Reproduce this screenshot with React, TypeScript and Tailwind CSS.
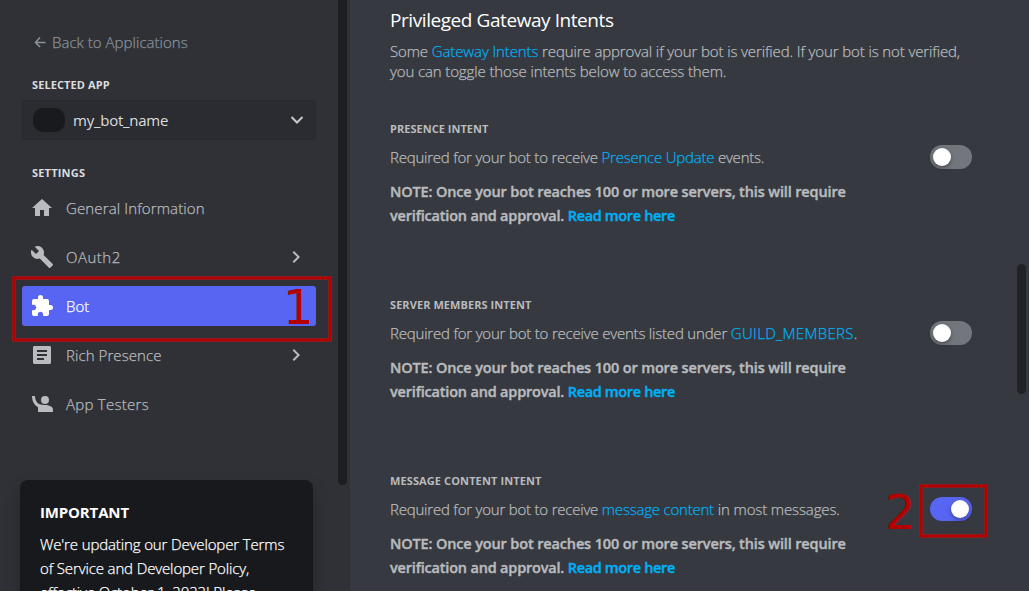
import type { ReactNode } from "react";

function Line({ className, children }: { className?: string; children: ReactNode }) {
  return <div className={`whitespace-nowrap ${className ?? ""}`}>{children}</div>;
}

function Icon({ d }: { d: string }) {
  return (
    <svg className="size-6 shrink-0" viewBox="0 0 24 24" fill="currentColor" fillRule="evenodd">
      <path d={d} />
    </svg>
  );
}

const icons = {
  home: "M10 20v-6h4v6h5v-8h3L12 3 2 12h3v8z",
  wrench:
    "M22.7 19l-9.1-9.1c.9-2.3.4-5-1.5-6.9-2-2-5-2.4-7.4-1.3L9 6 6 9 1.6 4.7C.4 7.1.9 10.1 2.9 12.1c1.9 1.9 4.6 2.4 6.9 1.5l9.1 9.1c.4.4 1 .4 1.4 0l2.3-2.3c.5-.4.5-1.1.1-1.4z",
  puzzle:
    "M20.5 11H19V7c0-1.1-.9-2-2-2h-4V3.5a2.5 2.5 0 00-5 0V5H4c-1.1 0-1.99.9-1.99 2v3.8H3.5c1.49 0 2.7 1.21 2.7 2.7s-1.21 2.7-2.7 2.7H2V20c0 1.1.9 2 2 2h3.8v-1.5c0-1.49 1.21-2.7 2.7-2.7 1.49 0 2.7 1.21 2.7 2.7V22H17c1.1 0 2-.9 2-2v-4h1.5a2.5 2.5 0 000-5z",
  article:
    "M19.500 3h-15C3.700 3 3 3.700 3 4.500v15c0 .8.7 1.500 1.500 1.500h15c.8 0 1.500-.7 1.500-1.500v-15c0-.8-.7-1.500-1.500-1.500zM14 17H7v-2h7v2zm3-4H7v-2h10v2zm0-4H7V7h10v2z",
  tester:
    "M15 4a4 4 0 100 8 4 4 0 000-8zM2 4h3c0 4.200 2 7.800 6 8.600 1.500.4 2.500.4 4 .4 4 0 8 1.500 8 4.500V20H8v-4.800C4.200 13.200 2 9 2 4z",
};

function Chevron() {
  return (
    <svg className="size-6" viewBox="0 0 24 24" fill="currentColor">
      <path d="M10 6L8.590 7.410 13.170 12l-4.580 4.590L10 18l6-6z" />
    </svg>
  );
}

function NavRow({
  icon,
  label,
  tracking,
  chevron,
  active,
}: {
  icon: string;
  label: string;
  tracking: string;
  chevron?: boolean;
  active?: boolean;
}) {
  return (
    <div
      className={`flex h-10 items-center rounded-[3px] pr-2 pl-2 ${
        active ? "bg-[#5865f2] text-white" : "text-[#b9bbbe]"
      }`}
    >
      <Icon d={icon} />
      <Line className={`ml-3 flex-1 text-[15px] leading-5 font-light [-webkit-text-stroke:0.25px] ${tracking}`}>
        {label}
      </Line>
      {chevron && <Chevron />}
    </div>
  );
}

function Toggle({ on }: { on?: boolean }) {
  return (
    <div
      className={`flex h-6 w-[42px] items-center rounded-full px-[3px] ${
        on ? "justify-end bg-[#5865f2]" : "bg-[#72767d]"
      }`}
    >
      <div className="size-[18px] rounded-full bg-white shadow-[0_2px_4px_rgba(0,0,0,0.35)]" />
    </div>
  );
}

function Intent({
  title,
  titleTracking,
  children,
  on,
}: {
  title: string;
  titleTracking: string;
  children: ReactNode;
  on?: boolean;
}) {
  return (
    <section className="flex h-44 shrink-0 text-[#b9bbbe]">
      <div className="flex-1">
        <Line className={`text-[11px] leading-4 font-bold ${titleTracking}`}>{title}</Line>
        <div className="mt-2.5 text-[15px] leading-5 font-light [-webkit-text-stroke:0.25px]">{children}</div>
        <div className="mt-[13px] text-[14.5px] leading-6 font-semibold [-webkit-text-stroke:0.4px]">
          <Line className="tracking-[-0.14px]">NOTE: Once your bot reaches 100 or more servers, this will require</Line>
          <Line className="tracking-[-0.19px]">
            verification and approval. <a className="tracking-[-0.34px] text-[#00aff4]">Read more here</a>
          </Line>
        </div>
      </div>
      <div className="pt-6">
        <Toggle on={on} />
      </div>
    </section>
  );
}

function Sidebar() {
  return (
    <aside className="flex w-[350px] shrink-0 bg-[#2f3136]">
      <div className="flex w-[338px] flex-col pl-[22px]">
        <div className="mt-8 flex h-5 shrink-0 items-center pl-3 text-[#8a929b]">
          <svg className="h-3 w-3" viewBox="0 0 12 12" fill="none" stroke="currentColor" strokeWidth="1.500">
            <path d="M11.500 6.500H1.500M6 1.500L1.500 6.500L6 11" />
          </svg>
          <Line className="ml-1.5 text-[15px] leading-5 font-light tracking-[0.03px] [-webkit-text-stroke:0.25px]">
            Back to Applications
          </Line>
        </div>
        <Line className="mt-[25px] pl-2.5 text-[11px] leading-4 font-bold tracking-[0.1px] text-[#dcddde]">
          SELECTED APP
        </Line>
        <div className="mt-[7px] flex h-10 w-[294px] shrink-0 items-center rounded-[4px] border border-[#26282c] bg-[#2b2c31] pr-1.5 pl-2.5 text-[#dcddde]">
          <div className="h-6 w-8 rounded-[10px] bg-[#191a1d]" />
          <Line className="ml-2 flex-1 text-[15px] leading-5 tracking-[-0.25px]">my_bot_name</Line>
          <svg className="size-6" viewBox="0 0 24 24" fill="none" stroke="#c7c9cb" strokeWidth="2">
            <path d="M6.500 9L12 14.500L17.500 9" />
          </svg>
        </div>
        <Line className="mt-[25px] pl-2.5 text-[11px] leading-4 font-bold tracking-[0.2px] text-[#dcddde]">SETTINGS</Line>
        <nav className="mt-[7px] flex w-[294px] shrink-0 flex-col gap-[9px]">
          <NavRow icon={icons.home} label="General Information" tracking="tracking-[0.13px]" />
          <NavRow icon={icons.wrench} label="OAuth2" tracking="tracking-[0.5px]" chevron />
          <NavRow icon={icons.puzzle} label="Bot" tracking="tracking-normal" active />
          <NavRow icon={icons.article} label="Rich Presence" tracking="tracking-[0.08px]" chevron />
          <NavRow icon={icons.tester} label="App Testers" tracking="tracking-[0.27px]" />
        </nav>
        <div className="mt-14 -ml-0.5 h-60 w-[293px] shrink-0 rounded-lg bg-[#18191c] px-5 pt-[22px] text-white shadow-[0_8px_16px_rgba(0,0,0,0.24)]">
          <Line className="text-[15px] leading-5 font-bold tracking-[-0.15px]">IMPORTANT</Line>
          <div className="mt-2.5 text-[15px] leading-6 font-light tracking-[-0.13px] [-webkit-text-stroke:0.25px]">
            <Line>We're updating our Developer Terms</Line>
            <Line>of Service and Developer Policy,</Line>
            <Line>effective October 1, 2022! Please</Line>
          </div>
        </div>
      </div>
      <div className="h-[485px] w-[9px] rounded-b-full rounded-t-[4px] bg-[#1d1e21]" />
    </aside>
  );
}

export default function App() {
  return (
    <div className="relative flex h-[591px] w-[1029px] overflow-hidden bg-[#36393f] font-['Open_Sans','Noto_Sans',sans-serif]">
      <Sidebar />
      <main className="flex w-[667px] shrink-0 flex-col pt-2 pr-[45px] pl-10">
        <Line className="text-[19px] leading-6 tracking-[-0.43px] text-white">Privileged Gateway Intents</Line>
        <div className="mt-[9px] mb-10 text-[15px] leading-5 font-light tracking-[-0.12px] text-[#b9bbbe] [-webkit-text-stroke:0.25px]">
          <Line>
            Some <a className="text-[#00aff4]">Gateway Intents</a> require approval if your bot is verified. If your bot
            is not verified,
          </Line>
          <Line>you can toggle those intents below to access them.</Line>
        </div>
        <Intent title="PRESENCE INTENT" titleTracking="tracking-[0.03px]">
          <Line className="tracking-[-0.22px]">
            Required for your bot to receive <a className="text-[#00aff4]">Presence Update</a> events.
          </Line>
        </Intent>
        <Intent title="SERVER MEMBERS INTENT" titleTracking="tracking-[0.07px]">
          <Line className="tracking-[-0.2px]">
            Required for your bot to receive events listed under{" "}
            <a className="tracking-[0.32px] text-[#00aff4]">GUILD_MEMBERS</a>.
          </Line>
        </Intent>
        <Intent title="MESSAGE CONTENT INTENT" titleTracking="tracking-[0.11px]" on>
          <Line className="tracking-[-0.21px]">
            Required for your bot to receive <a className="text-[#00aff4]">message content</a>
            <span className="tracking-[-0.12px]"> in most messages.</span>
          </Line>
        </Intent>
      </main>
      <div className="mt-[264px] h-[130px] w-[9px] rounded-full bg-[#212226]" />

      <div className="absolute top-[276px] left-3 h-[66px] w-80 border-3 border-[#b50000] shadow-[inset_0_0_0_1px_#8c1c21] outline-1 -outline-offset-1 outline-[#8c1c21]" />
      <div className="absolute top-[484px] left-[919px] h-[54px] w-[69px] border-3 border-[#b50000] shadow-[inset_0_0_0_1px_#8c1c21] outline-1 -outline-offset-1 outline-[#8c1c21]" />
      <span className="absolute top-[277px] left-[283px] font-['DejaVu_Sans',sans-serif] text-[48px] leading-[60px] text-[#b50000]">
        1
      </span>
      <span className="absolute top-[482px] left-[885px] font-['DejaVu_Sans',sans-serif] text-[48px] leading-[60px] text-[#b50000]">
        2
      </span>
    </div>
  );
}
